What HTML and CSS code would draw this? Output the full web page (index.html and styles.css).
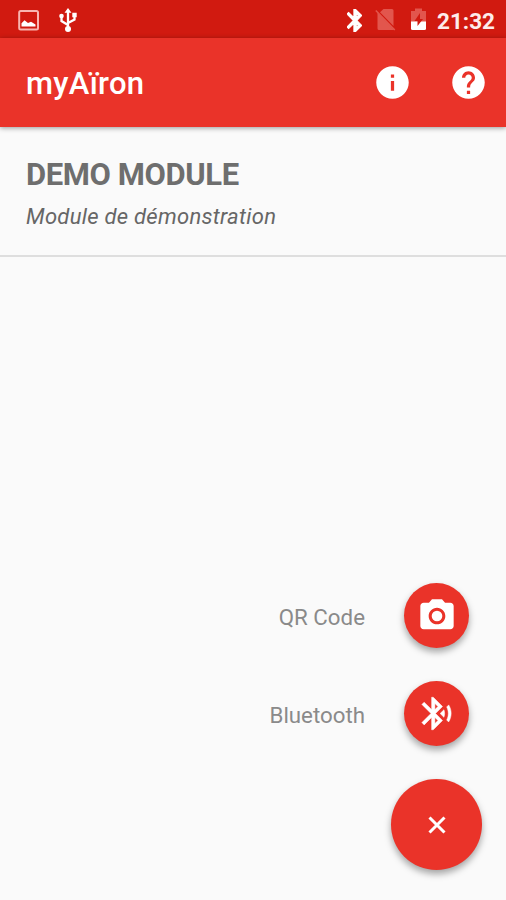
FILE: index.html
```html
<!DOCTYPE html>
<html lang="fr">
<head>
  <meta charset="UTF-8">
  <title>myAïron</title>
  <meta name="viewport" content="width=device-width, initial-scale=1.0">
  <link rel="stylesheet" href="styles.css">
</head>
<body>

  <div class="status-bar">
    <svg class="status-picture" viewBox="0 0 21 21">
      <rect x="1.2" y="1" width="18.800" height="18.500" rx="1.500" fill="none" stroke="#f9b5b0" stroke-width="2"/>
      <path d="M3.500 16.500v-3.200l3-3 3.500 2.700 3-1.200 4.500 2.700v2z" fill="#fff"/>
    </svg>
    <svg class="status-usb" viewBox="0 0 20 24">
      <path d="M10 21V3M10 17L3.500 13V8M10 15l6.500-3.500V7" fill="none" stroke="#fff" stroke-width="2.300"/>
      <path d="M10 0l3.500 4.800h-7zM14.300 4.800h4.400v4.400h-4.400z" fill="#fff"/>
      <circle cx="3.500" cy="8" r="2.300" fill="#fff"/>
      <circle cx="10" cy="21" r="3" fill="#fff"/>
    </svg>
    <svg class="status-bluetooth" viewBox="5 2 13 20">
      <path fill="#fff" stroke="#fff" stroke-width="1" d="M17.710 7.710L12 2h-1v7.590L6.410 5 5 6.410 10.590 12 5 17.590 6.410 19 11 14.410V22h1l5.710-5.710-4.300-4.290 4.300-4.290zM13 5.830l1.880 1.880L13 9.590V5.830zm1.880 10.460L13 18.170v-3.760l1.880 1.880z"/>
    </svg>
    <svg class="status-sim" viewBox="0 0 21 23">
      <path d="M8.500 1H17q1.500 0 1.500 1.500V18L5 4.300zM2.500 4.500L19 21.500q-.5.500-1 .5H4q-1.500 0-1.500-1.500z" fill="#e2564d"/>
      <path d="M.8 2.500L19.800 22" stroke="#e2564d" stroke-width="1.500"/>
    </svg>
    <svg class="status-battery" viewBox="0 0 17 23">
      <path d="M1 3.500h4V1h7v2.500h4V15H1z" fill="#e2564d"/>
      <path d="M1 14h15v7q0 1.500-1.500 1.500h-12Q1 22.500 1 21z" fill="#fff"/>
      <path d="M10 5.500L4.500 13.500h3v5L13 11.500h-3z" fill="#d11a10"/>
    </svg>
    <span class="clock">21:32</span>
  </div>

  <header class="app-bar">
    <h1>myAïron</h1>
    <svg class="action" viewBox="0 0 24 24">
      <path d="M12 2C6.480 2 2 6.480 2 12s4.480 10 10 10 10-4.480 10-10S17.520 2 12 2zm1 15h-2v-6h2v6zm0-8h-2V7h2v2z"/>
    </svg>
    <svg class="action" viewBox="0 0 24 24">
      <path d="M12 2C6.480 2 2 6.480 2 12s4.480 10 10 10 10-4.480 10-10S17.520 2 12 2zm1 17h-2v-2h2v2zm2.070-7.750l-.9.920C13.450 12.900 13 13.500 13 15h-2v-.5c0-1.100.45-2.100 1.170-2.830l1.240-1.260c.37-.36.59-.86.59-1.410 0-1.100-.9-2-2-2s-2 .9-2 2H8c0-2.210 1.790-4 4-4s4 1.790 4 4c0 .88-.36 1.680-.93 2.250z"/>
    </svg>
  </header>

  <main>
    <div class="module">
      <h2>DEMO MODULE</h2>
      <p>Module de démonstration</p>
    </div>
  </main>

  <div class="fab-menu">
    <div class="fab-row">
      <span class="fab-label">QR Code</span>
      <div class="fab">
        <svg viewBox="0 0 24 24">
          <circle cx="12" cy="12" r="3.200"/>
          <path d="M9 2L7.170 4H4c-1.100 0-2 .9-2 2v12c0 1.100.9 2 2 2h16c1.100 0 2-.9 2-2V6c0-1.100-.9-2-2-2h-3.170L15 2H9zm3 15c-2.760 0-5-2.240-5-5s2.240-5 5-5 5 2.240 5 5-2.240 5-5 5z"/>
        </svg>
      </div>
    </div>
    <div class="fab-row">
      <span class="fab-label">Bluetooth</span>
      <div class="fab fab-bluetooth">
        <svg viewBox="0 0 24 24">
          <path d="M14.240 12.010l2.320 2.320c.28-.72.44-1.510.44-2.330 0-.82-.16-1.590-.43-2.310l-2.330 2.320zm5.290-5.300l-1.260 1.260c.63 1.210.98 2.570.98 4.020s-.36 2.820-.98 4.020l1.200 1.200c.97-1.540 1.540-3.360 1.540-5.310-.01-1.890-.55-3.670-1.480-5.190zm-3.820 1L10 2H9v7.590L4.410 5 3 6.410 8.590 12 3 17.590 4.410 19 9 14.410V22h1l5.710-5.710-4.300-4.290 4.300-4.290zM11 5.830l1.880 1.880L11 9.590V5.830zm1.880 10.460L11 18.170v-3.760l1.880 1.880z"/>
        </svg>
      </div>
    </div>
    <div class="fab fab-main">
      <svg viewBox="0 0 18 18">
        <path d="M1.500 1.500l15 15M16.500 1.500l-15 15"/>
      </svg>
    </div>
  </div>

</body>
</html>
```
FILE: styles.css
```css
* {
  box-sizing: border-box;
}

body {
  display: flex;
  flex-direction: column;
  height: 900px;
  margin: 0;
  background: #fafafa;
  font-family: Roboto, "Liberation Sans", sans-serif;
  overflow: hidden;
}

h1, h2, p {
  margin: 0;
}

svg {
  display: block;
  flex: none;
}

.status-bar {
  display: flex;
  align-items: center;
  height: 38px;
  padding: 2px 12px 0 18px;
  background: #d11a10;
}

.status-picture {
  width: 21px;
  height: 21px;
}

.status-usb {
  width: 20px;
  height: 24px;
  margin-left: 19px;
}

.status-bluetooth {
  width: 15px;
  height: 23px;
  margin-left: auto;
}

.status-sim {
  width: 21px;
  height: 23px;
  margin: 0 0 2px 13px;
}

.status-battery {
  width: 17px;
  height: 24px;
  margin: 0 10px 3px 14px;
}

.clock {
  width: 57px;
  padding-top: 2px;
  color: #fdeceb;
  font-size: 22.5px;
  font-weight: 700;
  line-height: 34px;
  white-space: nowrap;
}

.app-bar {
  display: flex;
  align-items: center;
  gap: 37px;
  height: 89px;
  padding: 0 18px 0 26px;
  background: #ea3329;
  box-shadow: 0 1px 5px rgba(0, 0, 0, 0.4);
}

.app-bar h1 {
  margin-right: auto;
  padding-top: 2px;
  color: #fff;
  font-size: 31px;
  font-weight: 500;
  letter-spacing: 0.3px;
}

.action {
  width: 39px;
  height: 39px;
  fill: #fff;
}

main {
  flex: 1;
}

.module {
  height: 130px;
  padding: 29px 26px 0;
  border-bottom: 2px solid #dedede;
}

.module h2 {
  color: #6e6e6e;
  font-size: 31px;
  font-weight: 700;
  letter-spacing: -0.4px;
  line-height: 38px;
}

.module p {
  margin-top: 9px;
  color: #666;
  font-size: 22px;
  font-style: italic;
  letter-spacing: 0.28px;
  line-height: 28px;
}

.fab-menu {
  display: flex;
  flex-direction: column;
  align-items: flex-end;
  padding: 0 24px 30px 0;
}

.fab-row {
  display: flex;
  align-items: center;
  gap: 39px;
  margin: 0 13px 33px 0;
}

.fab-label {
  padding-top: 3px;
  color: #8a8a8a;
  font-size: 22.3px;
}

.fab {
  display: flex;
  align-items: center;
  justify-content: center;
  width: 65px;
  height: 65px;
  border-radius: 50%;
  background: #ea3329;
  box-shadow: 0 4px 7px rgba(0, 0, 0, 0.35);
}

.fab svg {
  width: 40px;
  height: 40px;
  fill: #fff;
}

.fab-bluetooth svg {
  width: 39px;
  height: 39px;
  stroke: #fff;
  stroke-width: 0.3;
}

.fab-main {
  width: 91px;
  height: 91px;
}

.fab-main svg {
  width: 18px;
  height: 18px;
  stroke: #fff;
  stroke-width: 3;
}
```
